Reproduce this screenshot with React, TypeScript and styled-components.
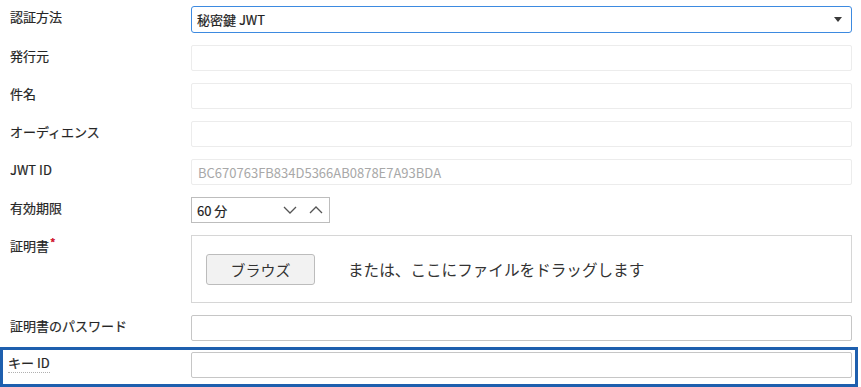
import React from 'react'
import styled, { createGlobalStyle } from 'styled-components'

const GlobalStyle = createGlobalStyle`
  html, body {
    margin: 0;
    padding: 0;
    background: #ffffff;
  }
  body {
    font-family: "Noto Sans CJK JP", "Noto Sans", sans-serif;
    color: #333333;
  }
`

const Form = styled.div`
  display: flex;
  flex-direction: column;
  gap: 12px;
  padding: 6px 9px 0 0;
  width: 861px;
  box-sizing: border-box;
`

const Row = styled.div`
  display: grid;
  grid-template-columns: 191px 1fr;
  align-items: start;
`

const Highlight = styled.div`
  display: grid;
  grid-template-columns: 188px 1fr;
  align-items: start;
  border: 3px solid #1e5fae;
  padding: 2px 3px 6px 0;
  margin: -6px -6px 0 0;
  height: 40px;
  box-sizing: border-box;
`

const Label = styled.div<{ $inset?: number }>`
  padding-left: ${p => p.$inset ?? 10}px;
  padding-top: 1px;
  font-size: 13px;
  line-height: 20px;
  color: #262626;
  white-space: nowrap;
  -webkit-text-stroke: 0.2px #262626;
`

const Dotted = styled.span`
  display: inline-block;
  line-height: 18px;
  border-bottom: 1px dotted #b0b0b0;
`

const Required = styled.span`
  color: #d0112b;
  -webkit-text-stroke: 0.4px #d0112b;
  font-size: 12px;
  vertical-align: 3px;
  line-height: 10px;
  margin-left: 1px;
`

const Select = styled.div`
  height: 27px;
  box-sizing: border-box;
  border: 1px solid #3d8ae0;
  border-radius: 3px;
  display: flex;
  align-items: center;
  justify-content: space-between;
  padding: 0 9px 0 5px;
  font-size: 13px;
  color: #222;
  -webkit-text-stroke: 0.2px #222;
`

const Caret = styled.span`
  width: 0;
  height: 0;
  border-left: 4px solid transparent;
  border-right: 4px solid transparent;
  border-top: 5px solid #3a3a3a;
`

const TextBox = styled.div<{ $strong?: boolean }>`
  height: 26px;
  box-sizing: border-box;
  border: 1px solid ${p => (p.$strong ? '#c6c6c6' : '#ececec')};
  border-radius: 2px;
  display: flex;
  align-items: center;
  padding: 0 6px;
  font-size: 13px;
  color: #a8a8a8;
`

const Spinner = styled.div`
  width: 139px;
  height: 26px;
  box-sizing: border-box;
  border: 1px solid #bdbdbd;
  display: flex;
  align-items: center;
  padding: 0 6px 0 5px;
  font-size: 13px;
  color: #222;
  -webkit-text-stroke: 0.2px #222;
`

const SpinValue = styled.span`
  flex: 1;
`

const SpinArrows = styled.span`
  display: flex;
  gap: 12px;
  align-items: center;
`

const DropZone = styled.div`
  height: 68px;
  box-sizing: border-box;
  border: 1px solid #d6d6d6;
  display: flex;
  align-items: center;
  padding: 0 0 0 14px;
  gap: 33px;
`

const BrowseButton = styled.button`
  width: 109px;
  height: 31px;
  background: #f2f2f2;
  border: 1px solid #bcbcbc;
  border-radius: 3px;
  font-family: "Noto Sans CJK JP", sans-serif;
  font-size: 15px;
  color: #333;
  padding: 0;
  margin-top: 1px;
`

const DropText = styled.span`
  font-size: 15.6px;
  color: #333;
`

function Chevron({ up }: { up?: boolean }) {
  return (
    <svg width="14" height="8" viewBox="0 0 14 8">
      <path
        d={up ? 'M1 7 L7 1 L13 7' : 'M1 1 L7 7 L13 1'}
        fill="none"
        stroke="#555"
        strokeWidth="1.3"
      />
    </svg>
  )
}

export default function App() {
  return (
    <>
      <GlobalStyle />
      <Form>
        <Row>
          <Label>認証方法</Label>
          <Select>
            <span>秘密鍵 JWT</span>
            <Caret />
          </Select>
        </Row>
        <Row>
          <Label>発行元</Label>
          <TextBox />
        </Row>
        <Row>
          <Label>件名</Label>
          <TextBox />
        </Row>
        <Row>
          <Label>オーディエンス</Label>
          <TextBox />
        </Row>
        <Row>
          <Label>JWT ID</Label>
          <TextBox>BC670763FB834D5366AB0878E7A93BDA</TextBox>
        </Row>
        <Row>
          <Label>有効期限</Label>
          <Spinner>
            <SpinValue>60 分</SpinValue>
            <SpinArrows>
              <Chevron />
              <Chevron up />
            </SpinArrows>
          </Spinner>
        </Row>
        <Row>
          <Label>
            証明書<Required>*</Required>
          </Label>
          <DropZone>
            <BrowseButton>ブラウズ</BrowseButton>
            <DropText>または、ここにファイルをドラッグします</DropText>
          </DropZone>
        </Row>
        <Row>
          <Label>証明書のパスワード</Label>
          <TextBox $strong />
        </Row>
        <Highlight>
          <Label $inset={5}>
            <Dotted>キー ID</Dotted>
          </Label>
          <TextBox $strong />
        </Highlight>
      </Form>
    </>
  )
}
